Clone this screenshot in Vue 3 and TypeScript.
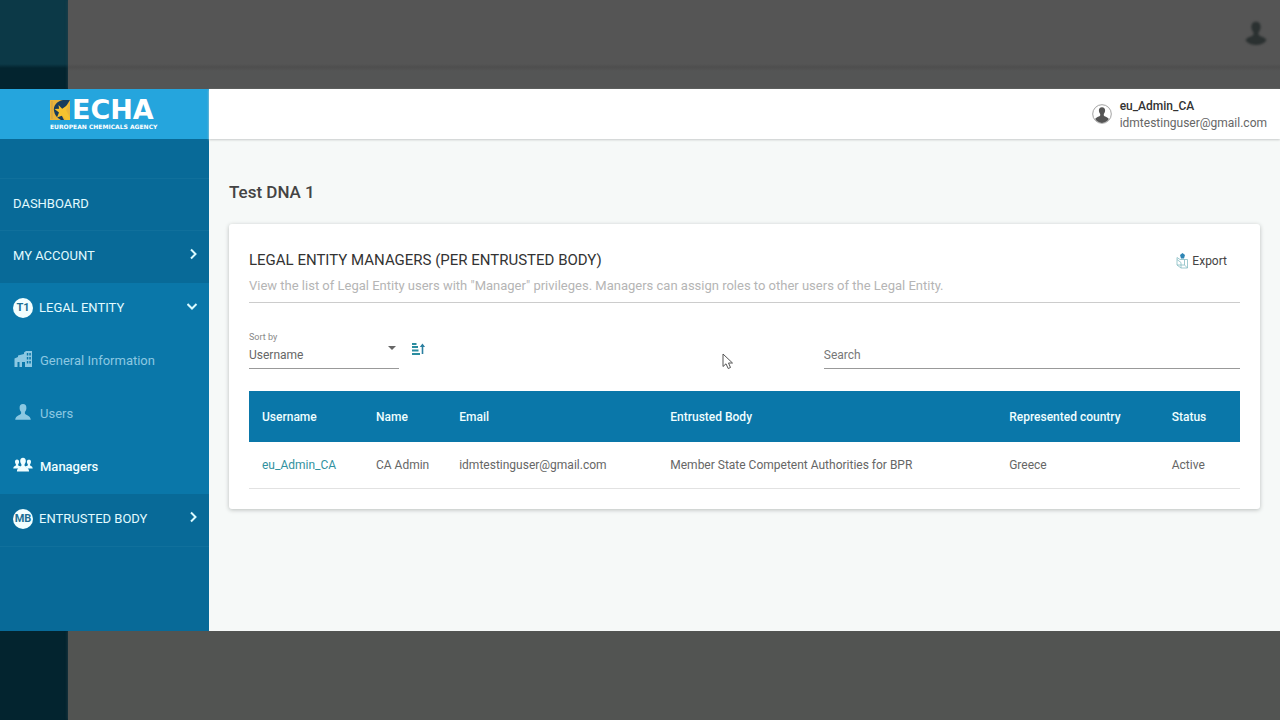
<script setup lang="ts">
import { ref } from 'vue'

interface Manager {
  username: string
  name: string
  email: string
  body: string
  country: string
  status: string
}

const sortKey = ref('Username')
const search = ref('')
const sortOptions = ['Username', 'Name', 'Email', 'Status']
const columns = ['Username', 'Name', 'Email', 'Entrusted Body', 'Represented country', 'Status']
const managers: Manager[] = [
  {
    username: 'eu_Admin_CA',
    name: 'CA Admin',
    email: 'idmtestinguser@gmail.com',
    body: 'Member State Competent Authorities for BPR',
    country: 'Greece',
    status: 'Active',
  },
]
</script>

<template>
  <div class="stage">
    <div class="band band-top" aria-hidden="true">
      <div class="band-side"></div>
      <div class="band-main">
        <svg class="ghost-user" viewBox="0 0 20 20" width="28" height="30">
          <path d="M10 2c2.200 0 3.400 1.600 3.300 3.800 0 1.600-.7 3-1.500 3.800v1.600c.3 1.200 5.400 1.600 5.700 4.200C15.600 17.700 13 18.600 10 18.600S4.400 17.700 2.500 15.400c.3-2.600 5.400-3 5.700-4.200V9.600C7.400 8.800 6.700 7.400 6.700 5.800 6.600 3.600 7.800 2 10 2z" fill="#2b3131" />
        </svg>
      </div>
    </div>

    <div class="app">
      <aside class="sidebar">
        <a class="logo" href="#" aria-label="ECHA European Chemicals Agency">
          <span class="logo-row">
            <svg viewBox="0 0 20 20" width="20" height="20" aria-hidden="true">
              <rect width="20" height="20" fill="#e9b43a" />
              <path d="M20 0H13C7 1 3 6 4 11c.6 4 3 7 7 9h3l-3-6 4-6z" fill="#183c5c" />
              <path d="M8.500 5l3.700 3.700L19 4l-3 6 4 7.500V20h-4l-3.500-4.500L7 17.500l2-5L4.500 9l4.600-.2z" fill="#f6c22f" />
              <path d="M2 1v18" stroke="#c99d48" stroke-width="1" />
            </svg>
            <span class="logo-name">ECHA</span>
          </span>
          <span class="logo-sub">EUROPEAN CHEMICALS AGENCY</span>
        </a>

        <nav class="menu">
          <a class="item line" href="#"><span class="label">DASHBOARD</span></a>
          <button class="item line" type="button">
            <span class="label">MY ACCOUNT</span>
            <svg class="chev" viewBox="0 0 12 12" width="12" height="12"><path d="M4 1.500L8.500 6 4 10.500" /></svg>
          </button>
          <div class="group">
            <button class="item" type="button">
              <span class="badge">T1</span>
              <span class="label">LEGAL ENTITY</span>
              <svg class="chev" viewBox="0 0 12 12" width="12" height="12"><path d="M0.500 4L5 8.500 9.500 4" /></svg>
            </button>
            <a class="item dim" href="#">
              <svg class="icon" viewBox="0 0 20 20" width="20" height="20">
                <path fill-rule="evenodd" d="M1.500 9.500L5 8V6.500L11 5V3.500L13 2h6v16h-7v-5H9v5H6.500v-5H4.500v5h-3zM13.800 4v2.500h1.500V4zM16.300 4v2.500h1.500V4zM13.800 8v2.500h1.500V8zM16.300 8v2.500h1.500V8zM13.800 12v2.500h1.500V12zM16.300 12v2.500h1.500V12z" />
              </svg>
              <span class="label">General Information</span>
            </a>
            <a class="item dim" href="#">
              <svg class="icon" viewBox="0 0 20 20" width="20" height="20">
                <path d="M10 2c2.300 0 3.500 1.700 3.400 3.900 0 1.700-.7 3-1.500 3.900v1.700c.3 1.400 5.500 1.800 5.900 6.300H2.200c.4-4.500 5.600-4.900 5.900-6.300V9.800C7.300 8.900 6.600 7.600 6.600 5.900 6.500 3.700 7.700 2 10 2z" />
              </svg>
              <span class="label">Users</span>
            </a>
            <a class="item active" href="#">
              <svg class="icon" viewBox="0 0 20 20" width="20" height="20">
                <path d="M4 4.500c1.400 0 2.200 1 2.100 2.400 0 1-.4 1.800-.9 2.300v1c.2.600 1.900.8 2.800 1.600-1 .5-1.700 1-2.100 1.700H.3c.1-2.500 2.400-2.500 2.600-3.300v-1C2.400 8.700 2 7.900 2 6.900 1.900 5.500 2.600 4.500 4 4.500z" />
                <path d="M16 4.500c-1.400 0-2.200 1-2.100 2.400 0 1 .4 1.800.9 2.300v1c-.2.600-1.900.8-2.800 1.600 1 .5 1.700 1 2.100 1.700h5.600c-.1-2.500-2.400-2.500-2.600-3.300v-1c.5-.5.900-1.300.9-2.300.1-1.400-.6-2.400-2-2.400z" />
                <path d="M10 2.800c1.900 0 2.900 1.400 2.800 3.200 0 1.400-.6 2.500-1.200 3.200v1.500c.3 1 4.200 1.500 4.500 5.800H3.900c.3-4.300 4.200-4.800 4.500-5.800V9.200C7.800 8.500 7.200 7.400 7.200 6 7.100 4.200 8.100 2.800 10 2.800z" />
              </svg>
              <span class="label">Managers</span>
            </a>
          </div>
          <button class="item line-bottom" type="button">
            <span class="badge">MB</span>
            <span class="label">ENTRUSTED BODY</span>
            <svg class="chev" viewBox="0 0 12 12" width="12" height="12"><path d="M4 1.500L8.500 6 4 10.500" /></svg>
          </button>
        </nav>
      </aside>

      <div class="main">
        <header class="topbar">
          <svg viewBox="0 0 20 20" width="20" height="20" aria-hidden="true">
            <circle cx="10" cy="10" r="9.300" fill="#fff" stroke="#8a8a8a" stroke-width=".8" />
            <path d="M10 3.200c2.100 0 3.200 1.400 3.100 3.300 0 1.500-.7 2.700-1.300 3.400v1.600c.3 1 3.800 1.300 5 3.600C15.200 17.600 12.800 18.900 10 18.900S4.800 17.600 3.200 15.100c1.200-2.300 4.700-2.600 5-3.600V9.900C7.600 9.200 6.900 8 6.900 6.500 6.800 4.600 7.900 3.200 10 3.200z" fill="#555" />
          </svg>
          <div class="who">
            <strong>eu_Admin_CA</strong>
            <span>idmtestinguser@gmail.com</span>
          </div>
        </header>

        <main class="content">
          <h1>Test DNA 1</h1>
          <section class="card">
            <div class="card-head">
              <div>
                <h2>LEGAL ENTITY MANAGERS (PER ENTRUSTED BODY)</h2>
                <p>View the list of Legal Entity users with "Manager" privileges. Managers can assign roles to other users of the Legal Entity.</p>
              </div>
              <button class="export" type="button">
                <svg viewBox="0 0 14 16" width="14" height="16" aria-hidden="true">
                  <path d="M2 4.500l3 2h7.500v8.500H6L2 12zM6 15V9.500L2 6.500M9.500 6.500V12M2 12h7.500l3 3" fill="none" stroke="#86bcc3" stroke-width=".8" />
                  <path d="M7.500 0l2.500 2-1 3.500H6L5 2z" fill="#2f86b5" />
                </svg>
                <span>Export</span>
              </button>
            </div>

            <div class="tools">
              <div class="sort">
                <label for="sort">Sort by</label>
                <div class="select-wrap">
                  <select id="sort" v-model="sortKey">
                    <option v-for="o in sortOptions" :key="o">{{ o }}</option>
                  </select>
                  <svg class="caret" viewBox="0 0 8 4" width="8" height="4"><path d="M0 0h8L4 4z" fill="#666" /></svg>
                </div>
              </div>
              <button class="order" type="button" aria-label="Sort ascending">
                <svg viewBox="0 0 14 12" width="14" height="12">
                  <path d="M1 1h4.500M1 4h6M1 7.500h6.500M1 11h8" stroke="#2b8c9f" stroke-width="1.800" fill="none" />
                  <path d="M11.500 11V2" stroke="#2b7fa0" stroke-width="1.600" />
                  <path d="M8.800 4L11.500.5 14 4z" fill="#2b7fa0" />
                </svg>
              </button>
              <input v-model="search" class="search" type="text" placeholder="Search" aria-label="Search" />
            </div>

            <table>
              <colgroup>
                <col class="c1" /><col class="c2" /><col class="c3" /><col class="c4" /><col class="c5" /><col />
              </colgroup>
              <thead>
                <tr><th v-for="c in columns" :key="c" scope="col">{{ c }}</th></tr>
              </thead>
              <tbody>
                <tr v-for="m in managers" :key="m.username">
                  <td><a href="#">{{ m.username }}</a></td>
                  <td>{{ m.name }}</td>
                  <td>{{ m.email }}</td>
                  <td>{{ m.body }}</td>
                  <td>{{ m.country }}</td>
                  <td>{{ m.status }}</td>
                </tr>
              </tbody>
            </table>
          </section>
        </main>
      </div>
    </div>

    <div class="band band-bottom" aria-hidden="true">
      <div class="band-side"></div>
      <div class="band-main"></div>
    </div>

    <svg class="pointer" viewBox="0 0 12 17" width="12" height="17" aria-hidden="true">
      <path d="M1 1v12.500l3-2.700 2.200 4.700 2.300-1L6.500 10h4z" fill="#fff" stroke="#555" stroke-width="1" />
    </svg>
  </div>
</template>

<style>
body {
  margin: 0;
  background: #535553;
}
</style>

<style scoped>
.stage {
  position: relative;
  display: grid;
  grid-template-rows: 89px 1fr 89px;
  min-height: 100vh;
  font-family: Roboto, "Liberation Sans", sans-serif;
  font-size: 12px;
  line-height: 16px;
  color: #666;
}
.stage * {
  box-sizing: border-box;
}
button,
input,
select {
  font: inherit;
  color: inherit;
  background: none;
  border: 0;
  border-radius: 0;
  padding: 0;
  margin: 0;
}
a {
  color: inherit;
  text-decoration: none;
}
.band {
  display: flex;
  overflow: hidden;
}
.band-side {
  width: 68px;
  background: #03242f;
}
.band-main {
  flex: 1;
  background: #525452;
  box-shadow: 0 0 3px #2c4148;
}
.band-top .band-side {
  background: linear-gradient(#0c3947 64px, #03242f 68px);
}
.band-top .band-main {
  display: flex;
  justify-content: flex-end;
  align-items: flex-start;
  padding: 18px 10px 0 0;
  background: linear-gradient(#555 64px, #4e4e4e 67px, #545555 71px);
}
.ghost-user {
  filter: blur(1px);
}
.app {
  display: flex;
}
.sidebar {
  width: 209px;
  flex: none;
  background: #086a98;
}
.logo {
  display: flex;
  flex-direction: column;
  height: 50px;
  padding: 11px 0 0 50px;
  background: #25a5dd;
  color: #fff;
}
.logo-row {
  display: flex;
  align-items: center;
  gap: 2px;
  height: 20px;
}
.logo-name {
  font-family: "DejaVu Sans", sans-serif;
  font-size: 27px;
  line-height: 20px;
  font-weight: 700;
}
.logo-sub {
  padding-top: 3px;
  font-family: "DejaVu Sans", sans-serif;
  font-size: 6px;
  line-height: 8px;
  font-weight: 700;
  white-space: nowrap;
}
.menu {
  padding-top: 40px;
  font-size: 13px;
  color: #e2fbff;
}
.item {
  display: flex;
  align-items: center;
  width: 100%;
  height: 52px;
  padding: 0 10px 2px 13px;
  text-align: left;
}
.line {
  box-shadow: 0 -1px #10709c;
}
.line-bottom {
  box-shadow: 0 1px #10709c;
}
.label {
  flex: 1;
}
.chev {
  fill: none;
  stroke: #d9faff;
  stroke-width: 2;
  margin-bottom: 5px;
}
.group {
  display: flex;
  flex-direction: column;
  gap: 1px;
  background: #0a77a9;
}
.badge {
  display: flex;
  align-items: center;
  justify-content: center;
  width: 20px;
  height: 20px;
  margin-right: 6px;
  border-radius: 50%;
  background: #f2ffff;
  color: #1d6f93;
  font-size: 11px;
  font-weight: 700;
}
.icon {
  fill: currentColor;
  margin: 0 7px 4px 0;
}
.dim {
  color: #8cc8e2;
}
.active {
  color: #effeff;
  font-weight: 500;
}
.main {
  flex: 1;
  min-width: 0;
  background: #f6f9f8;
}
.topbar {
  display: flex;
  justify-content: flex-end;
  align-items: center;
  gap: 8px;
  height: 50px;
  padding: 0 13px 1px 0;
  background: #fff;
  box-shadow: 0 1px 2px #c8cbca;
}
.who {
  display: flex;
  flex-direction: column;
  padding-top: 2px;
  line-height: 17px;
}
.who strong {
  font-weight: 500;
  color: #333;
}
.content {
  padding: 41px 20px 0;
}
h1 {
  margin: 0 0 20px;
  font-size: 17px;
  line-height: 24px;
  font-weight: 500;
  color: #444;
}
.card {
  padding: 26px 20px 20px;
  background: #fff;
  border-radius: 3px;
  box-shadow: 0 1px 4px #b9bdbc;
}
.card-head {
  display: flex;
  justify-content: space-between;
  align-items: flex-start;
  height: 53px;
  border-bottom: 1px solid #ccc;
}
h2 {
  margin: 0 0 8px;
  font-size: 15px;
  line-height: 20px;
  font-weight: 400;
  color: #333;
}
.card-head p {
  margin: 0;
  font-size: 13px;
  color: #b5b5b5;
}
.export {
  display: flex;
  align-items: center;
  gap: 3px;
  height: 22px;
  margin-right: 13px;
  color: #444;
}
.tools {
  display: flex;
  align-items: flex-start;
  padding: 29px 0 22px;
}
.sort {
  width: 150px;
}
.sort label {
  display: block;
  height: 10px;
  font-size: 9px;
  line-height: 10px;
  color: #888;
}
.select-wrap {
  position: relative;
  height: 27px;
  border-bottom: 1px solid #999;
}
.select-wrap select {
  display: block;
  width: 100%;
  height: 26px;
  appearance: none;
}
.caret {
  position: absolute;
  right: 3px;
  top: 4px;
}
.order {
  display: flex;
  margin: 11px 0 0 12px;
}
.search {
  width: 42%;
  height: 37px;
  margin-left: auto;
  padding-top: 10px;
  border-bottom: 1px solid #999;
}
.search::placeholder {
  color: #777;
  opacity: 1;
}
table {
  width: 100%;
  table-layout: fixed;
  border-collapse: collapse;
}
.c1 { width: 11.500%; }
.c2 { width: 8.400%; }
.c3 { width: 21.300%; }
.c4 { width: 34.200%; }
.c5 { width: 16.400%; }
th,
td {
  padding: 0 0 0 13px;
  text-align: left;
  white-space: nowrap;
}
th {
  height: 51px;
  background: #0a77a9;
  color: #effeff;
  font-weight: 500;
}
td {
  height: 46px;
  border-bottom: 1px solid #e2e2e2;
}
td a {
  color: #31919f;
}
.pointer {
  position: absolute;
  left: 722px;
  top: 353px;
}
</style>
